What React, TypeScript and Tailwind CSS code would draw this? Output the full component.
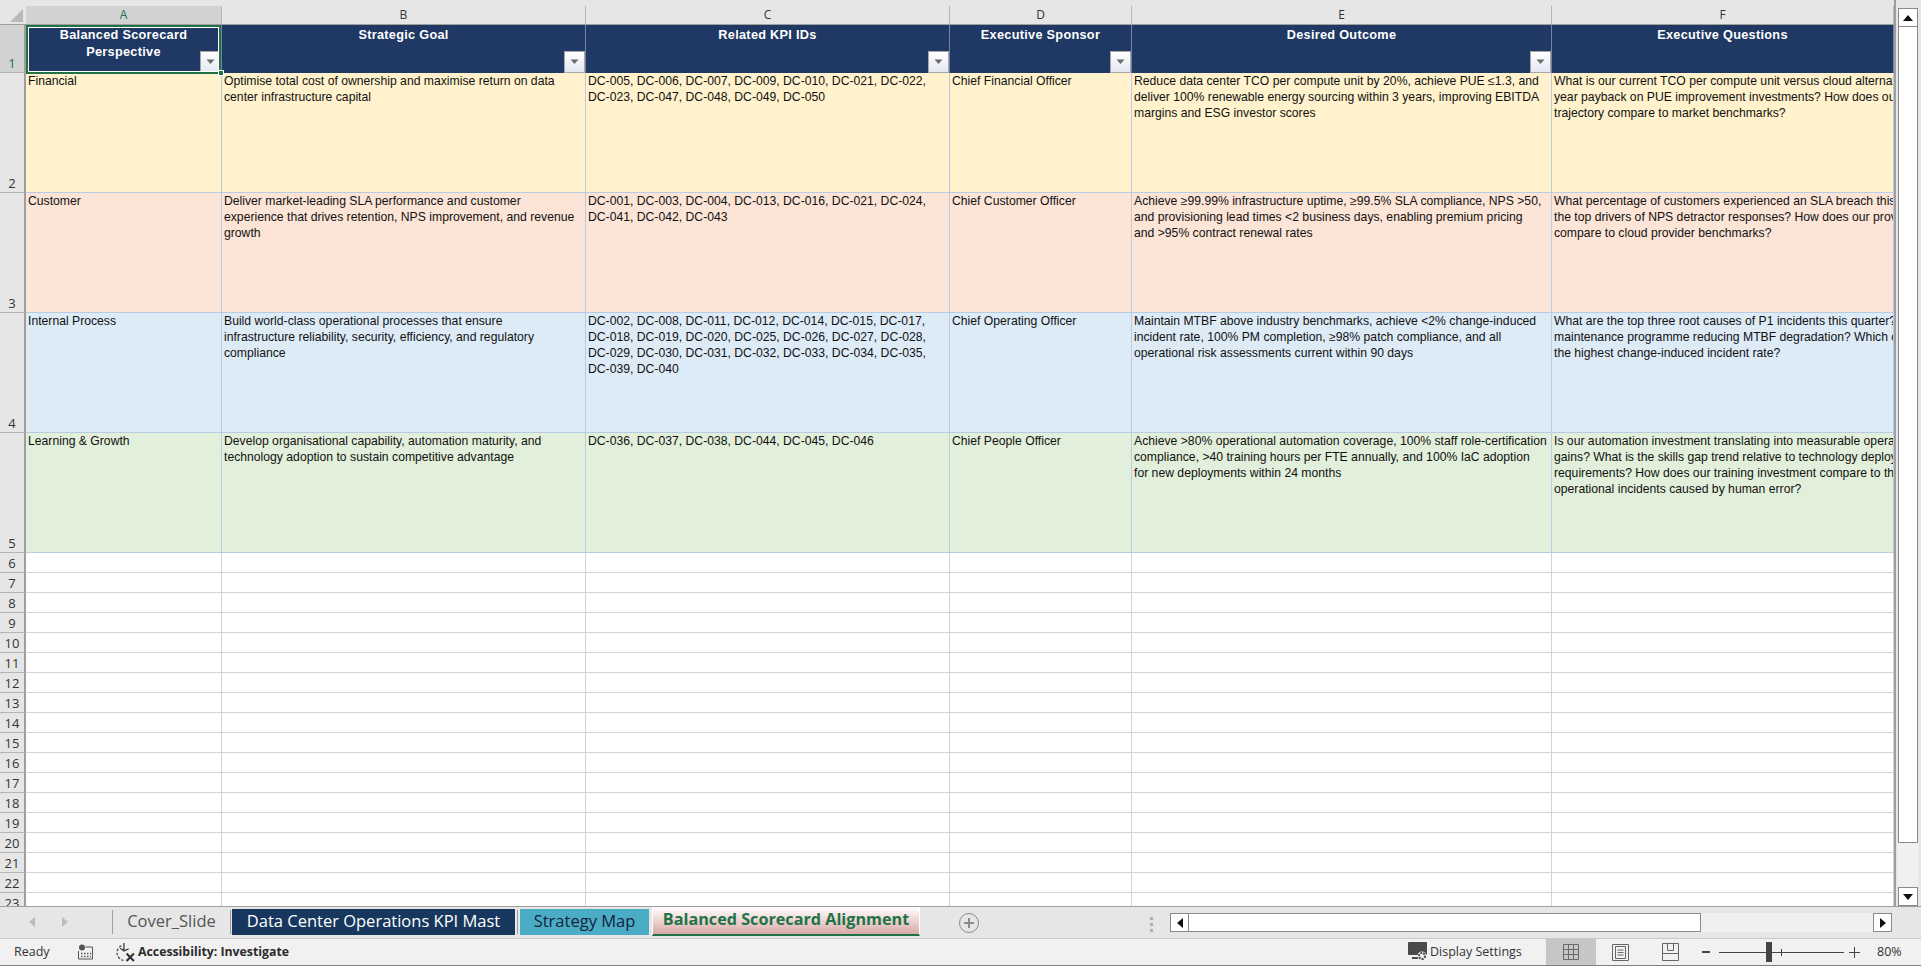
import React from 'react';
import clsx from 'clsx';

const FONT_SHEET = "[font-family:'Liberation_Sans',Arial,sans-serif]";

interface DataRow {
  num: number;
  bg: string;
  cells: string[][];
}

const dataRows: DataRow[] = [
  {
    num: 2,
    bg: 'bg-[#fff2cc]',
    cells: [
      ['Financial'],
      ['Optimise total cost of ownership and maximise return on data', 'center infrastructure capital'],
      ['DC-005, DC-006, DC-007, DC-009, DC-010, DC-021, DC-022,', 'DC-023, DC-047, DC-048, DC-049, DC-050'],
      ['Chief Financial Officer'],
      ['Reduce data center TCO per compute unit by 20%, achieve PUE ≤1.3, and', 'deliver 100% renewable energy sourcing within 3 years, improving EBITDA', 'margins and ESG investor scores'],
      ['What is our current TCO per compute unit versus cloud alternatives?', 'year payback on PUE improvement investments? How does our TCO', 'trajectory compare to market benchmarks?'],
    ],
  },
  {
    num: 3,
    bg: 'bg-[#fce4d6]',
    cells: [
      ['Customer'],
      ['Deliver market-leading SLA performance and customer', 'experience that drives retention, NPS improvement, and revenue', 'growth'],
      ['DC-001, DC-003, DC-004, DC-013, DC-016, DC-021, DC-024,', 'DC-041, DC-042, DC-043'],
      ['Chief Customer Officer'],
      ['Achieve ≥99.99% infrastructure uptime, ≥99.5% SLA compliance, NPS >50,', 'and provisioning lead times <2 business days, enabling premium pricing', 'and >95% contract renewal rates'],
      ['What percentage of customers experienced an SLA breach this quarter?', 'the top drivers of NPS detractor responses? How does our provisioning', 'compare to cloud provider benchmarks?'],
    ],
  },
  {
    num: 4,
    bg: 'bg-[#ddebf7]',
    cells: [
      ['Internal Process'],
      ['Build world-class operational processes that ensure', 'infrastructure reliability, security, efficiency, and regulatory', 'compliance'],
      ['DC-002, DC-008, DC-011, DC-012, DC-014, DC-015, DC-017,', 'DC-018, DC-019, DC-020, DC-025, DC-026, DC-027, DC-028,', 'DC-029, DC-030, DC-031, DC-032, DC-033, DC-034, DC-035,', 'DC-039, DC-040'],
      ['Chief Operating Officer'],
      ['Maintain MTBF above industry benchmarks, achieve <2% change-induced', 'incident rate, 100% PM completion, ≥98% patch compliance, and all', 'operational risk assessments current within 90 days'],
      ['What are the top three root causes of P1 incidents this quarter?', 'maintenance programme reducing MTBF degradation? Which change', 'the highest change-induced incident rate?'],
    ],
  },
  {
    num: 5,
    bg: 'bg-[#e2efda]',
    cells: [
      ['Learning & Growth'],
      ['Develop organisational capability, automation maturity, and', 'technology adoption to sustain competitive advantage'],
      ['DC-036, DC-037, DC-038, DC-044, DC-045, DC-046'],
      ['Chief People Officer'],
      ['Achieve >80% operational automation coverage, 100% staff role-certification', 'compliance, >40 training hours per FTE annually, and 100% IaC adoption', 'for new deployments within 24 months'],
      ['Is our automation investment translating into measurable operational', 'gains? What is the skills gap trend relative to technology deployment', 'requirements? How does our training investment compare to the', 'operational incidents caused by human error?'],
    ],
  },
];

const headers = [
  ['Balanced Scorecard', 'Perspective'],
  ['Strategic Goal'],
  ['Related KPI IDs'],
  ['Executive Sponsor'],
  ['Desired Outcome'],
  ['Executive Questions'],
];

const letters = ['A', 'B', 'C', 'D', 'E', 'F'];
const emptyRows = Array.from({ length: 18 }, (_, i) => i + 6);
const GRID = 'grid grid-cols-[26px_196px_364px_364px_182px_420px_342px]';

const FilterButton = () => (
  <div className="absolute right-0 bottom-0 w-[21px] h-[22px] border border-[#a6a6a6] bg-gradient-to-b from-white to-[#e4e8f2] flex items-center justify-center">
    <svg width="9" height="6" viewBox="0 0 9 6">
      <path d="M0.5 0.5h8L4.5 5z" fill="#6b6b6b" />
    </svg>
  </div>
);

const RowNum = ({ n, selected, className }: { n: number; selected?: boolean; className?: string }) => (
  <div
    className={clsx(
      "flex justify-center items-end border-r-2 border-r-[#9e9e9e] border-b border-b-[#b5b5b5] text-[13px] leading-[18px] [font-family:'Open_Sans',sans-serif]",
      selected ? 'bg-[#d2d2d2] text-[#217346]' : 'bg-[#e6e6e6] text-[#333]',
      className
    )}
  >
    {n}
  </div>
);

const ColumnHeaders = () => (
  <div className={clsx(GRID, 'h-[19px] bg-[#e6e6e6] border-b border-b-[#9e9e9e]')}>
    <div className="relative">
      <svg className="absolute left-[10px] top-[3px]" width="13" height="13" viewBox="0 0 13 13">
        <path d="M13 0v13H0z" fill="#b9b9b9" />
      </svg>
    </div>
    {letters.map((l, i) => (
      <div
        key={l}
        className={clsx(
          "flex items-center justify-center border-r border-r-[#b5b5b5] text-[12px] [font-family:'Open_Sans',sans-serif]",
          i === 0 ? 'bg-[#d2d2d2] text-[#217346]' : 'text-[#333]'
        )}
      >
        {l}
      </div>
    ))}
  </div>
);

const Sheet = () => (
  <div className="flex-1 min-w-0 overflow-hidden bg-white">
    <div className="h-[6px] bg-[#e6e6e6]" />
    <ColumnHeaders />
    {/* header row */}
    <div className={clsx(GRID, 'h-[48px]')}>
      <RowNum n={1} selected />
      {headers.map((lines, i) => (
        <div
          key={i}
          className={clsx(
            FONT_SHEET,
            'relative bg-[#1f3864] border-r border-r-[#6f82a8] text-white font-bold text-[12.7px] leading-[17px] text-center pt-[2px] tracking-[0.3px]'
          )}
        >
          {lines.map(line => (
            <div key={line} className="whitespace-nowrap">{line}</div>
          ))}
          {i < 5 && <FilterButton />}
          {i === 0 && (
            <>
              <div className="absolute inset-x-0 top-0 -bottom-[1px] border-2 border-[#217346] pointer-events-none">
                <div className="w-full h-full border border-white" />
              </div>
              <div className="absolute -right-[3px] -bottom-[3px] w-[6px] h-[6px] bg-[#217346] border border-white z-10" />
            </>
          )}
        </div>
      ))}
    </div>
    {/* data rows */}
    {dataRows.map(row => (
      <div key={row.num} className={clsx(GRID, 'h-[120px]')}>
        <RowNum n={row.num} />
        {row.cells.map((lines, i) => (
          <div
            key={i}
            className={clsx(
              FONT_SHEET,
              row.bg,
              'overflow-hidden border-r border-b border-[#b8cce4] text-[12.2px] leading-[16px] text-[#111] pl-[2px]'
            )}
          >
            {lines.map(line => (
              <div key={line} className="whitespace-nowrap">{line}</div>
            ))}
          </div>
        ))}
      </div>
    ))}
    {/* empty rows */}
    {emptyRows.map(n => (
      <div key={n} className={clsx(GRID, 'h-[20px]')}>
        <RowNum n={n} />
        {letters.map(l => (
          <div key={l} className="border-r border-b border-[#d4d4d4]" />
        ))}
      </div>
    ))}
  </div>
);

const ArrowBtn = ({ dir, className }: { dir: 'up' | 'down' | 'left' | 'right'; className?: string }) => {
  const paths = { up: 'M1 8L6 2l5 6z', down: 'M1 2l5 6 5-6z', left: 'M8 1L2 6l6 5z', right: 'M2 1l6 5-6 5z' };
  return (
    <div className={clsx('shrink-0 flex items-center justify-center bg-white border border-[#8a8a8a]', className)}>
      <svg width="12" height="12" viewBox="0 0 12 12">
        <path d={paths[dir]} fill="#111" transform={dir === 'up' || dir === 'down' ? 'translate(0 1)' : 'translate(1 0)'} />
      </svg>
    </div>
  );
};

const VerticalScroll = () => (
  <div className="w-[27px] shrink-0 bg-[#e6e6e6] border-l-2 border-l-[#9e9e9e] flex flex-col pl-[2px] pr-[3px] pt-[8px]">
    <div className="flex-1 flex flex-col bg-[#f0f0f0] min-h-0">
      <ArrowBtn dir="up" className="h-[19px]" />
      <div className="h-[816px] bg-white border-x border-b border-[#8a8a8a]" />
      <div className="flex-1" />
      <ArrowBtn dir="down" className="h-[19px]" />
    </div>
  </div>
);

const TabBar = () => (
  <div className="h-[33px] shrink-0 flex bg-[#e6e6e6] border-t border-t-[#9e9e9e] border-b border-b-[#c8c8c8] text-[16.5px] leading-[22px] [font-family:'Open_Sans',sans-serif]">
    {/* sheet navigation arrows */}
    <div className="w-[112px] flex items-center pl-[29px] gap-[25px] pb-[2px]">
      <svg width="7" height="10" viewBox="0 0 7 10"><path d="M6 0L0 5l6 5z" fill="#bdbdbd" /></svg>
      <svg width="7" height="10" viewBox="0 0 7 10"><path d="M1 0l6 5-6 5z" fill="#bdbdbd" /></svg>
    </div>
    <div className="w-[1px] h-[24px] mt-[3px] bg-[#9e9e9e]" />
    <div className="w-[117px] h-[26px] mt-[2px] pb-[3px] flex items-center justify-center text-[#555]">Cover_Slide</div>
    <div className="w-[1px] h-[24px] mt-[3px] bg-[#9e9e9e]" />
    <div className="w-[283px] h-[26px] mt-[2px] pb-[3px] ml-[1px] flex items-center justify-center bg-[#17375e] text-white whitespace-nowrap">Data Center Operations KPI Mast</div>
    <div className="w-[1px] h-[24px] mt-[3px] ml-[2px] bg-[#9e9e9e]" />
    <div className="w-[129px] h-[26px] mt-[2px] pb-[3px] ml-[2px] flex items-center justify-center bg-[#4bacc6] text-[#14233c] whitespace-nowrap">Strategy Map</div>
    <div className="w-[268px] h-[29px] pb-[3px] ml-[3px] flex items-center justify-center bg-gradient-to-b from-white to-[#d8a9a8] border-b-2 border-b-[#217346] text-[#217346] text-[16.2px] font-bold border-x border-x-white whitespace-nowrap">Balanced Scorecard Alignment</div>
    <div className="w-[20px] h-[20px] ml-[39px] mt-[6px] rounded-full border border-[#8a8a8a] flex items-center justify-center">
      <svg width="12" height="12" viewBox="0 0 12 12"><path d="M6 1v10M1 6h10" stroke="#8a8a8a" strokeWidth="2" /></svg>
    </div>
    <div className="w-[3px] ml-[171px] mt-[10px] flex flex-col gap-[3px]">
      <div className="h-[3px] bg-[#b0b0b0]" />
      <div className="h-[3px] bg-[#b0b0b0]" />
      <div className="h-[3px] bg-[#b0b0b0]" />
    </div>
    {/* horizontal scrollbar */}
    <div className="w-[722px] ml-[17px] mt-[6px] h-[19px] flex bg-[#f0f0f0]">
      <ArrowBtn dir="left" className="w-[19px]" />
      <div className="w-[512px] bg-white border-y border-r border-[#8a8a8a]" />
      <div className="flex-1" />
      <ArrowBtn dir="right" className="w-[19px]" />
    </div>
  </div>
);

const StatusBar = () => (
  <div className="h-[27px] shrink-0 flex items-center bg-[#f1f1f1] border-b border-b-[#7f7f7f] text-[12.5px] text-[#333] [font-family:'Open_Sans',sans-serif]">
    <span className="ml-[14px] w-[64px]">Ready</span>
    {/* macro recorder */}
    <svg width="15" height="16" viewBox="0 0 15 16" className="mr-[22px]">
      <circle cx="4" cy="3.5" r="3" fill="#555" />
      <path d="M7.5 3H14.5V15H.5V7" fill="none" stroke="#555" />
      <path d="M3 9.5h1.5M6 9.5h1.5M9 9.5h1.5M12 9.5h1M3 12.5h1.5M6 12.5h1.5M9 12.5h1.5M12 12.5h1" stroke="#555" strokeWidth="1.4" />
    </svg>
    {/* accessibility */}
    <svg width="21" height="21" viewBox="0 0 20 20" className="mr-[2px]">
      <path d="M6 3.5a7.5 7.5 0 0 0 2 14" fill="none" stroke="#555" strokeWidth="1.3" strokeDasharray="2.5 1.5" />
      <path d="M8.5 1v7M5 6l3.5 2.5L13 6.5" fill="none" stroke="#444" strokeWidth="1.3" />
      <path d="M11 11l7 7M18 11l-7 7" stroke="#333" strokeWidth="2" />
    </svg>
    <span className="font-bold text-[#2b2b2b] text-[12.3px]">Accessibility: Investigate</span>
    <div className="flex-1" />
    {/* display settings */}
    <svg width="21" height="22" viewBox="0 0 21 22">
      <rect x="0" y="1" width="19" height="13" rx="1" fill="#4a4a4a" />
      <path d="M4 17h6" stroke="#4a4a4a" strokeWidth="2" />
      <circle cx="14" cy="15" r="4.5" fill="#f1f1f1" />
      <circle cx="14" cy="15" r="3" fill="none" stroke="#4a4a4a" strokeWidth="2" strokeDasharray="2 1" />
    </svg>
    <span className="w-[117px] text-[#333] pl-[1px]">Display Settings</span>
    <div className="w-[50px] h-full bg-[#c6c6c6] flex items-center justify-center">
      <svg width="16" height="16" viewBox="0 0 16 16">
        <path d="M.5.5h15v15H.5zM5.5.5v15M10.5.5v15M.5 5.5h15M.5 10.5h15" fill="none" stroke="#6a6a6a" />
      </svg>
    </div>
    <div className="w-[48px] flex justify-center">
      <svg width="17" height="17" viewBox="0 0 17 17">
        <path d="M.5.5h16v16H.5z" fill="none" stroke="#666" />
        <path d="M3.5 2.5h10v12h-10zM5.5 6h6M5.5 8.5h6M5.5 11h6" fill="none" stroke="#666" />
      </svg>
    </div>
    <svg width="17" height="18" viewBox="0 0 17 18" className="ml-[18px] mr-[23px]">
      <path d="M.5.5h16v17H.5zM.5 10.5h16M5.5.5v7h6v-7" fill="none" stroke="#666" />
    </svg>
    {/* zoom slider */}
    <span className="w-[8px] h-[1.5px] bg-[#444]" />
    <div className="relative w-[125px] h-[1px] bg-[#444] ml-[9px]">
      <div className="absolute left-[47px] -top-[10px] w-[6px] h-[20px] bg-[#444]" />
      <div className="absolute left-[62px] -top-[3px] w-[1px] h-[7px] bg-[#444]" />
    </div>
    <svg width="11" height="11" viewBox="0 0 11 11" className="ml-[5px]">
      <path d="M5.5 0v11M0 5.5h11" stroke="#444" />
    </svg>
    <span className="ml-[17px] w-[44px] text-[#333]">80%</span>
  </div>
);

export default function App() {
  return (
    <div className="h-screen w-full flex flex-col overflow-hidden bg-[#e6e6e6]">
      <div className="flex-1 min-h-0 flex">
        <Sheet />
        <VerticalScroll />
      </div>
      <TabBar />
      <StatusBar />
    </div>
  );
}
